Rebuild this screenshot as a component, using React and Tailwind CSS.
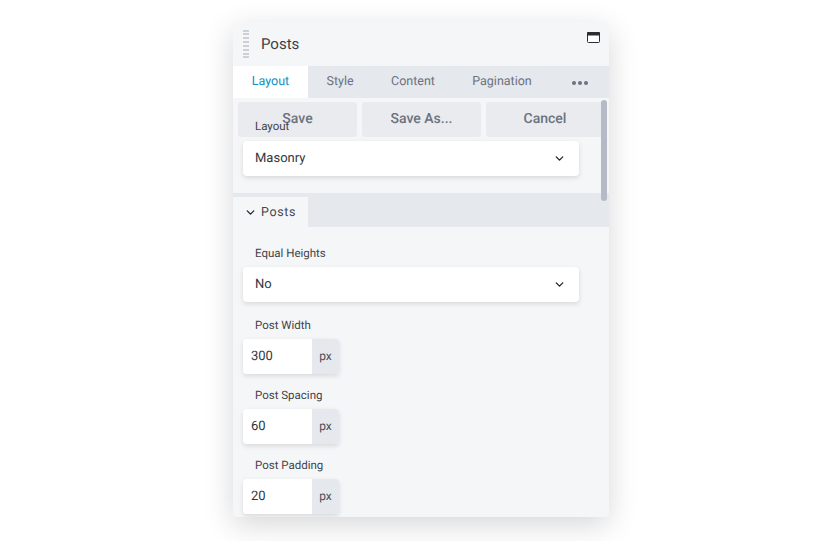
import { ChevronDown } from "lucide-react";

const tabs = ["Style", "Content", "Pagination"];

const SelectField = ({ label, value, labelClass = "mt-0" }) => (
  <div>
    <div className={`pl-[12px] text-[11.5px] leading-[16px] text-[#3f4349] ${labelClass}`}>{label}</div>
    <div className="mt-[6px] h-[35px] w-[336px] bg-white rounded-[4px] shadow-[0_2px_5px_rgba(0,0,0,0.12)] flex items-center justify-between pl-[12px] pr-[13px]">
      <span className="text-[13px] text-[#33373d]">{value}</span>
      <ChevronDown className="size-[13px] text-[#23262b]" strokeWidth={2.5} />
    </div>
  </div>
);

const UnitField = ({ label, value, gapClass }) => (
  <div className={gapClass}>
    <div className="pl-[12px] text-[11.5px] leading-[16px] text-[#3f4349]">{label}</div>
    <div className="mt-[6px] h-[35px] w-[96px] flex rounded-[4px] overflow-hidden shadow-[0_2px_5px_rgba(0,0,0,0.12)]">
      <div className="w-[69px] bg-white pl-[8px] text-[13px] leading-[35px] text-[#33373d]">{value}</div>
      <div className="flex-1 bg-[#e5e8ed] flex items-center justify-center pb-[1px] text-[12px] text-[#4b4f56]">px</div>
    </div>
  </div>
);

const App = () => {
  return (
    <div className="w-[813px] h-[541px] bg-white pt-[22px] pl-[233px] font-['Roboto',sans-serif] [text-rendering:geometricPrecision]">
      <div className="w-[376px] h-[495px] bg-[#f5f6f8] rounded-[4px] shadow-[0_8px_30px_rgba(0,0,0,0.16)] overflow-hidden flex flex-col">
        <div className="h-[44px] shrink-0 flex items-center relative">
          <div className="ml-[10px] w-[6px] h-[30px] flex flex-col justify-between py-[0.5px]">
            {Array(8).fill(null).map((_, idx) => (
              <div key={idx} className="h-[2px] bg-[#ccd1d7]"></div>
            ))}
          </div>
          <span className="ml-[12px] text-[15px] text-[#3c4045]">Posts</span>
          <svg className="absolute top-[10px] right-[9px]" width="13" height="11" viewBox="0 0 13 11">
            <rect x="0.5" y="0.5" width="12" height="10" rx="1" fill="#fff" stroke="#2a2d31" />
            <rect x="0" y="0" width="13" height="3.5" rx="1" fill="#2a2d31" />
          </svg>
        </div>

        <div className="h-[32px] shrink-0 bg-[#e5e8ed] flex items-center text-[12.5px]">
          <div className="w-[75px] h-full bg-white flex items-center justify-center text-[#0e8fbd]">Layout</div>
          <div className="w-[64px] text-center text-[#6b7280]">{tabs[0]}</div>
          <div className="w-[82px] text-center text-[#6b7280]">{tabs[1]}</div>
          <div className="w-[96px] text-center text-[#6b7280]">{tabs[2]}</div>
          <div className="ml-[22px] mt-[2px] flex gap-[2px]">
            <span className="size-[4px] rounded-full bg-[#6b7280]"></span>
            <span className="size-[4px] rounded-full bg-[#6b7280]"></span>
            <span className="size-[4px] rounded-full bg-[#6b7280]"></span>
          </div>
        </div>

        <div className="relative flex-1 overflow-hidden">
          <div className="absolute top-[4px] left-[5px] flex gap-[5px]">
            <div className="w-[119px] h-[35px] pb-[1px] rounded-[3px] bg-[#e9ebef] flex items-center justify-center text-[14px] font-medium text-[#6b7280]">Save</div>
            <div className="w-[119px] h-[35px] pb-[1px] rounded-[3px] bg-[#e9ebef] flex items-center justify-center text-[14px] font-medium text-[#6b7280]">Save As...</div>
            <div className="w-[118px] h-[35px] pb-[1px] rounded-[3px] bg-[#e9ebef] flex items-center justify-center text-[14px] font-medium text-[#6b7280]">Cancel</div>
          </div>
          <div className="absolute top-[2px] left-[368px] w-[6px] h-[101px] rounded-[3px] bg-[#b5bbc6]"></div>

          <div className="relative pl-[10px] pt-[20px]">
            <SelectField label="Layout" value="Masonry" labelClass="pb-[1px]" />
          </div>

          <div className="mt-[17px] h-[34px] bg-[#e5e8ed] pt-[4px]">
            <div className="w-[75px] h-[30px] bg-[#f5f6f8] flex items-center pl-[11px]">
              <ChevronDown className="size-[13px] text-[#23262b]" strokeWidth={2.5} />
              <span className="ml-[4px] mt-[2px] text-[12.5px] tracking-[0.6px] text-[#44484e]">Posts</span>
            </div>
          </div>

          <div className="pl-[10px] pt-[18px]">
            <SelectField label="Equal Heights" value="No" />
            <UnitField gapClass="mt-[15px]" label="Post Width" value="300" />
            <UnitField gapClass="mt-[13px]" label="Post Spacing" value="60" />
            <UnitField gapClass="mt-[13px]" label="Post Padding" value="20" />
          </div>
        </div>
      </div>
    </div>
  );
};

export default App;
